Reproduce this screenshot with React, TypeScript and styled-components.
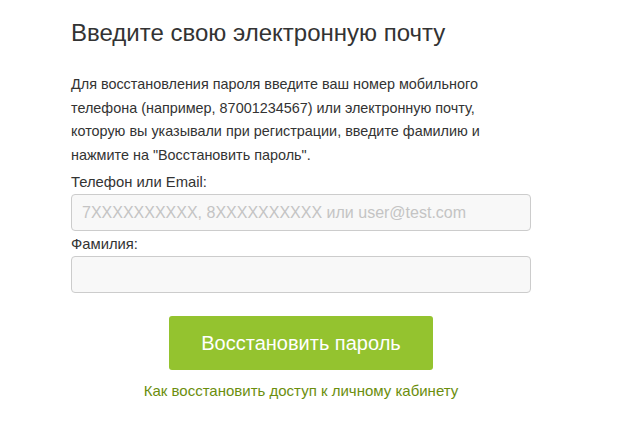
import React from "react";
import styled, { createGlobalStyle } from "styled-components";

const Global = createGlobalStyle`
  html, body { margin: 0; padding: 0; background: #fff; }
  body { font-family: "Liberation Sans", Arial, sans-serif; color: #333; }
`;

const Page = styled.div`
  padding: 16px 0 0 71px;
`;

const Form = styled.form`
  width: 460px;
  display: flex;
  flex-direction: column;
`;

const Title = styled.h1`
  margin: 0 0 23px;
  font-size: 24px;
  font-weight: normal;
  line-height: 34px;
  color: #333;
`;

const Intro = styled.p`
  max-width: 440px;
  margin: 0 0 5px;
  font-size: 14.4px;
  line-height: 23.5px;
  color: #333;
`;

const Label = styled.label`
  display: block;
  font-size: 14.8px;
  line-height: 20px;
  margin-bottom: 2px;
  color: #333;
`;

const Field = styled.div`
  display: flex;
  flex-direction: column;
  margin-bottom: 3px;
`;

const Input = styled.input`
  box-sizing: border-box;
  width: 460px;
  height: 37px;
  border: 1px solid #ccc;
  border-radius: 4px;
  background: #f8f8f8;
  padding: 0 10px;
  font-family: "Liberation Sans", Arial, sans-serif;
  font-size: 16px;
  color: #333;
  outline: none;
  &::placeholder { color: #c4c4c4; }
`;

const Actions = styled.div`
  display: flex;
  flex-direction: column;
  align-items: center;
  margin-top: 20px;
`;

const Button = styled.button`
  width: 264px;
  height: 54px;
  border: none;
  border-radius: 3px;
  background: #94c32f;
  color: #fff;
  font-family: "Liberation Sans", Arial, sans-serif;
  font-size: 20px;
  cursor: pointer;
`;

const HelpLink = styled.a`
  margin-top: 11px;
  font-size: 15px;
  line-height: 20px;
  color: #6b8e0e;
  text-decoration: none;
`;

export default function App() {
  return (
    <>
      <Global />
      <Page>
        <Form onSubmit={(e) => e.preventDefault()}>
          <Title>Введите свою электронную почту</Title>
          <Intro>
            Для восстановления пароля введите ваш номер мобильного телефона
            (например, 87001234567) или электронную почту, которую вы
            указывали при регистрации, введите фамилию и нажмите на
            "Восстановить пароль".
          </Intro>
          <Field>
            <Label htmlFor="login">Телефон или Email:</Label>
            <Input id="login" placeholder="7XXXXXXXXXX, 8XXXXXXXXXX или user@test.com" />
          </Field>
          <Field>
            <Label htmlFor="surname">Фамилия:</Label>
            <Input id="surname" />
          </Field>
          <Actions>
            <Button type="submit">Восстановить пароль</Button>
            <HelpLink href="#">Как восстановить доступ к личному кабинету</HelpLink>
          </Actions>
        </Form>
      </Page>
    </>
  );
}
